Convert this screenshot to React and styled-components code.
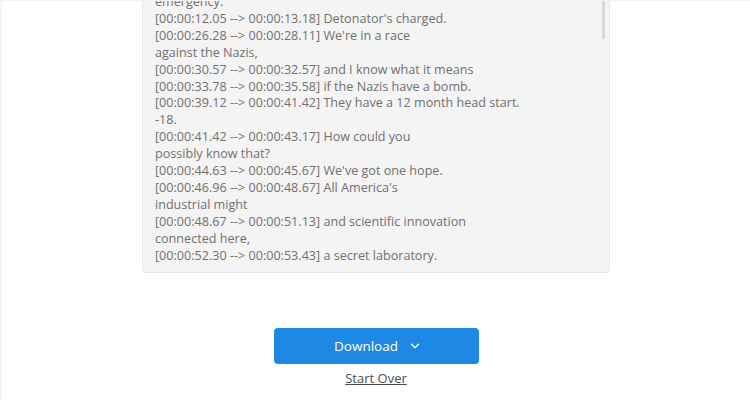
import { useLayoutEffect, useRef } from "react";
import styled, { createGlobalStyle } from "styled-components";
import { ChevronDown } from "lucide-react";

const GlobalStyle = createGlobalStyle`
  html, body {
    margin: 0;
    padding: 0;
    background: #ffffff;
  }
  body {
    font-family: "Open Sans", "Liberation Sans", sans-serif;
    color: #666666;
  }
`;

const Page = styled.div`
  height: 100vh;
  overflow-y: auto;
  box-sizing: border-box;
  border-left: 2px solid #f3f4f8;
  border-top: 1px solid #f3f3f3;
  scrollbar-width: none;
  display: flex;
  flex-direction: column;
  align-items: center;
  padding: 24px 0 13px;

  &::-webkit-scrollbar {
    display: none;
  }
`;

const Title = styled.h1`
  margin: 0 0 16px;
  font-size: 20px;
  font-weight: 600;
  color: #333;
`;

const Panel = styled.div`
  position: relative;
  box-sizing: border-box;
  flex-shrink: 0;
  width: 468px;
  height: 474px;
  background: #f4f4f4;
  border: 1px solid #e6e6e6;
  border-radius: 4px;
  padding: 8px 12px;
`;

const Transcript = styled.div`
  height: 100%;
  overflow-y: auto;
  scrollbar-width: none;
  font-size: 12.6px;
  line-height: 16.9px;
  color: #707070;
  white-space: pre-wrap;

  &::-webkit-scrollbar {
    display: none;
  }
`;

const ScrollThumb = styled.div`
  position: absolute;
  top: ${(props) => props.$top}px;
  right: 4px;
  width: 3px;
  height: ${(props) => props.$height}px;
  border-radius: 2px;
  background: #d8d8d8;
`;

const Actions = styled.div`
  display: flex;
  flex-direction: column;
  align-items: center;
  margin-top: 55px;
  gap: 5px;
`;

const DownloadButton = styled.button`
  display: flex;
  align-items: center;
  justify-content: center;
  gap: 10px;
  width: 205px;
  height: 36px;
  padding: 0 0 0 4px;
  border: none;
  border-radius: 4px;
  background: #1e88e5;
  color: #ffffff;
  font-family: inherit;
  font-size: 13.5px;
  font-weight: 500;
  cursor: pointer;
`;

const StartOver = styled.a`
  font-size: 13px;
  line-height: 18px;
  font-weight: 500;
  color: #4a4a4a;
  text-decoration: underline;
  cursor: pointer;
`;

const lines = [
  "[00:00:00.00 --> 00:00:01.20] J. Robert Oppenheimer.",
  "[00:00:01.20 --> 00:00:03.35] We imagine a future,",
  "and our imaginings horrify us.",
  "[00:00:03.35 --> 00:00:05.10] They won't fear it",
  "until they understand it.",
  "[00:00:05.10 --> 00:00:06.85] And they won't understand it",
  "until they've used it.",
  "[00:00:06.85 --> 00:00:08.40] Theory will take you",
  "only so far.",
  "[00:00:08.40 --> 00:00:10.15] Stand by.",
  "[00:00:10.15 --> 00:00:12.05] Shut it down in case of",
  "emergency.",
  "[00:00:12.05 --> 00:00:13.18] Detonator's charged.",
  "[00:00:26.28 --> 00:00:28.11] We're in a race",
  "against the Nazis,",
  "[00:00:30.57 --> 00:00:32.57] and I know what it means",
  "[00:00:33.78 --> 00:00:35.58] if the Nazis have a bomb.",
  "[00:00:39.12 --> 00:00:41.42] They have a 12 month head start.",
  "-18.",
  "[00:00:41.42 --> 00:00:43.17] How could you",
  "possibly know that?",
  "[00:00:44.63 --> 00:00:45.67] We've got one hope.",
  "[00:00:46.96 --> 00:00:48.67] All America's",
  "industrial might",
  "[00:00:48.67 --> 00:00:51.13] and scientific innovation",
  "connected here,",
  "[00:00:52.30 --> 00:00:53.43] a secret laboratory.",
  "[00:00:53.43 --> 00:00:55.20] A town in the desert.",
  "[00:00:55.20 --> 00:00:57.64] Every scientist and their family.",
  "[00:00:57.64 --> 00:00:59.10] Build a town.",
  "[00:00:59.10 --> 00:01:01.35] Are we saying there's a chance",
  "that when we push that button,",
  "[00:01:01.35 --> 00:01:03.80] we destroy the world?",
  "[00:01:03.80 --> 00:01:05.42] The chances are near zero.",
  "[00:01:05.42 --> 00:01:06.30] Near zero?",
  "[00:01:06.30 --> 00:01:08.55] What do you want from theory alone?",
  "[00:01:08.55 --> 00:01:09.70] Zero would be nice.",
];

export default function App() {
  const pageRef = useRef(null);

  useLayoutEffect(() => {
    const page = pageRef.current;
    if (page) page.scrollTop = page.scrollHeight;
  }, []);

  return (
    <>
      <GlobalStyle />
      <Page ref={pageRef}>
        <Title>Your transcript is ready</Title>
        <Panel>
          <Transcript>{lines.join("\n")}</Transcript>
          <ScrollThumb $top={4} $height={235} />
        </Panel>
        <Actions>
          <DownloadButton type="button">
            Download
            <ChevronDown size={14} strokeWidth={2.5} />
          </DownloadButton>
          <StartOver>Start Over</StartOver>
        </Actions>
      </Page>
    </>
  );
}
